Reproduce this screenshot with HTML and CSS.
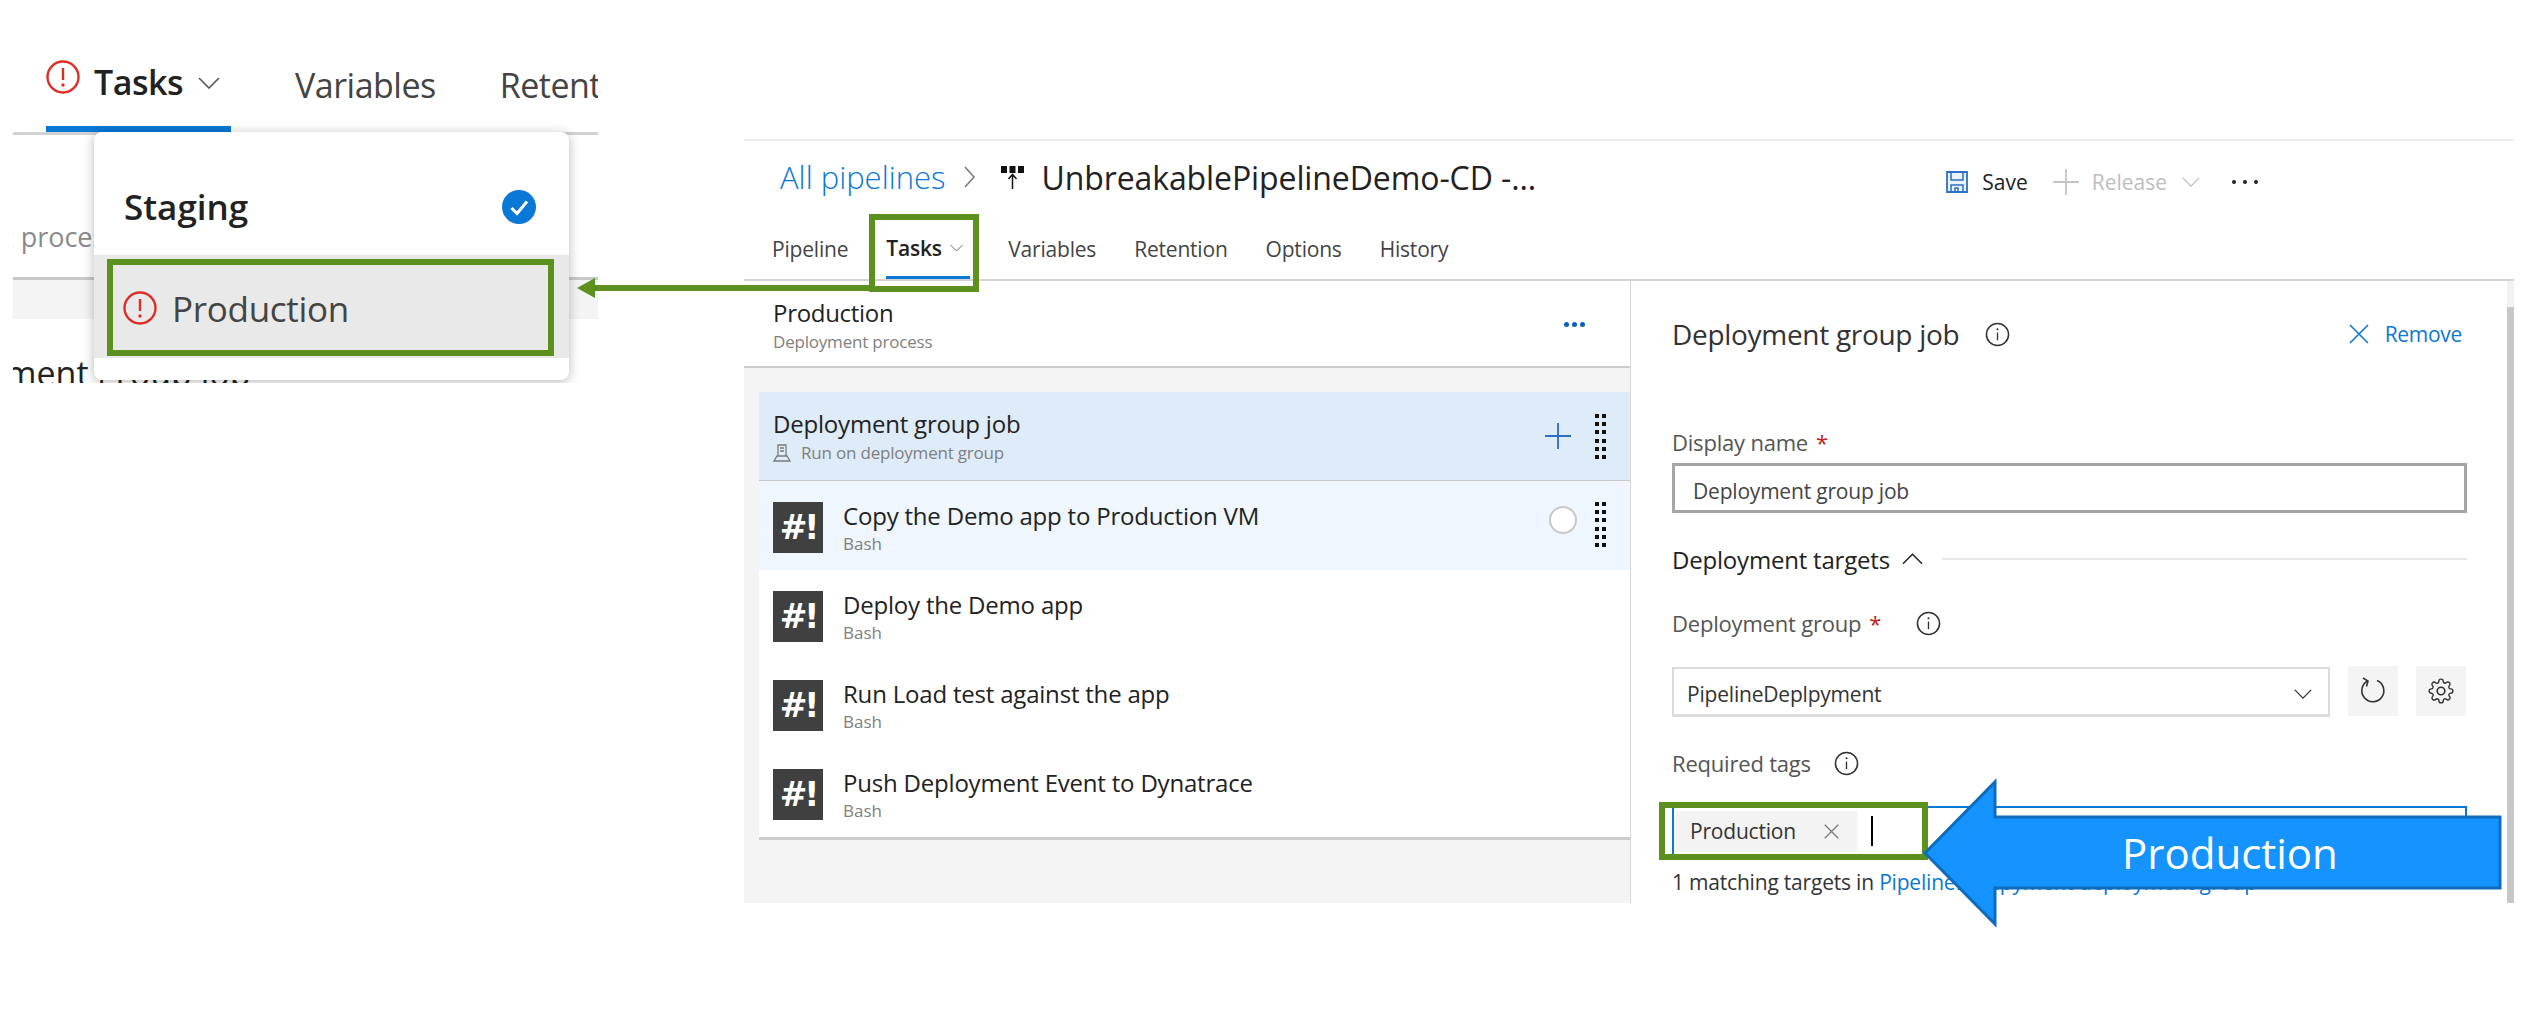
FILE: index.html
```html
<!DOCTYPE html>
<html lang="en">
<head>
<meta charset="UTF-8" />
<title>Deployment group job</title>
<link rel="stylesheet" href="styles.css">
</head>
<body>

<svg class="sprite" width="0" height="0">
  <symbol id="i-alert" viewBox="0 0 34 34">
    <circle cx="17" cy="17" r="15.5" fill="none" stroke="#dc2e28" stroke-width="2.4"/>
    <path d="M17 8v12" stroke="#dc2e28" stroke-width="2.4"/>
    <circle cx="17" cy="25" r="1.7" fill="#dc2e28"/>
  </symbol>
  <symbol id="i-check" viewBox="0 0 34 34">
    <circle cx="17" cy="17" r="17" fill="#0a78d6"/>
    <path d="M9.5 18l5.5 5.5 10-12" fill="none" stroke="#fff" stroke-width="3"/>
  </symbol>
  <symbol id="i-chev" viewBox="0 0 22 12">
    <path d="M1 1l10 10 10-10" fill="none" stroke="currentColor" stroke-width="1.6"/>
  </symbol>
  <symbol id="i-info" viewBox="0 0 26 26">
    <circle cx="13" cy="13" r="11.5" fill="none" stroke="#333" stroke-width="1.6"/>
    <path d="M13 11v8" stroke="#333" stroke-width="1.4"/>
    <circle cx="13" cy="7.5" r="1.1" fill="#333"/>
  </symbol>
  <symbol id="i-grip" viewBox="0 0 11 45">
    <path d="M0 0h4v4H0zM7 0h4v4H7zM0 8h4v4H0zM7 8h4v4H7zM0 16h4v4H0zM7 16h4v4H7zM0 25h4v4H0zM7 25h4v4H7zM0 33h4v4H0zM7 33h4v4H7zM0 41h4v4H0zM7 41h4v4H7z" fill="#111"/>
  </symbol>
  <symbol id="i-x" viewBox="0 0 20 20">
    <path d="M1 1l18 18M19 1L1 19" fill="none" stroke="currentColor" stroke-width="1.6"/>
  </symbol>
  <symbol id="i-plus" viewBox="0 0 26 26">
    <path d="M13 0v26M0 13h26" fill="none" stroke="currentColor" stroke-width="1.8"/>
  </symbol>
</svg>

<!-- left crop: tabs with the environment menu -->
<div class="crop-left">
  <div class="big-tabs">
    <div class="big-tab big-tab-active">
      <svg class="ic-34"><use href="#i-alert"/></svg>
      <span class="big-tab-name">Tasks</span>
      <svg class="big-chev"><use href="#i-chev"/></svg>
    </div>
    <div class="big-tab">Variables</div>
    <div class="big-tab">Retention</div>
  </div>
  <div class="under-sub">t process</div>
  <div class="under-band"></div>
  <div class="under-title">ment group job</div>

  <div class="env-menu">
    <div class="env-row env-staging">
      <span>Staging</span>
      <svg class="ic-34"><use href="#i-check"/></svg>
    </div>
    <div class="env-row env-production">
      <svg class="ic-34"><use href="#i-alert"/></svg>
      <span>Production</span>
    </div>
  </div>
</div>

<!-- right crop: release pipeline editor -->
<div class="crop-right">
  <div class="pipe-head">
    <a class="crumb">All pipelines</a>
    <svg class="crumb-chev" viewBox="0 0 11 22"><path d="M1 1l9 10-9 10" fill="none" stroke="#777" stroke-width="1.5"/></svg>
    <svg class="rel-icon" viewBox="0 0 23 23">
      <path d="M0 0h6v7H0zM8.500 0h6v7h-6zM17 0h6v7h-6z" fill="#111"/>
      <path d="M11.500 23V9M7.500 13l4-4.500 4 4.500" fill="none" stroke="#111" stroke-width="1.5"/>
    </svg>
    <span class="pipe-title">UnbreakablePipelineDemo-CD -...</span>
    <div class="toolbar">
      <svg class="save-icon" viewBox="0 0 22 22">
        <path d="M1 1h20v20H1z" fill="#eaf2fb" stroke="#2d6fc4" stroke-width="1.8"/>
        <path d="M5 1v8h12V1M5 21v-7h12v7M9 21v-4h3v4" fill="none" stroke="#2d6fc4" stroke-width="1.5"/>
      </svg>
      <span class="save-text">Save</span>
      <svg class="rel-plus"><use href="#i-plus"/></svg>
      <span class="rel-text">Release</span>
      <svg class="rel-chev"><use href="#i-chev"/></svg>
      <span class="tool-dots"><i></i><i></i><i></i></span>
    </div>
  </div>

  <div class="tabs">
    <div class="tab">Pipeline</div>
    <div class="tab tab-active">Tasks <svg class="tab-chev"><use href="#i-chev"/></svg></div>
    <div class="tab">Variables</div>
    <div class="tab">Retention</div>
    <div class="tab">Options</div>
    <div class="tab">History</div>
  </div>

  <div class="editor">
    <div class="tasks-col">
      <div class="stage-head">
        <div>
          <div class="stage-name">Production</div>
          <div class="stage-sub">Deployment process</div>
        </div>
        <span class="stage-dots"><i></i><i></i><i></i></span>
      </div>

      <div class="task-list">
        <div class="job-row">
          <div class="job-text">
            <div class="task-name">Deployment group job</div>
            <div class="job-sub">
              <svg class="agent-icon" viewBox="0 0 18 18">
                <path d="M5 1h8v11H5zM7 4h4M7 7h4M1 17l3-5h10l3 5z" fill="none" stroke="#7a7a7a" stroke-width="1.3"/>
              </svg>
              Run on deployment group
            </div>
          </div>
          <svg class="job-plus"><use href="#i-plus"/></svg>
          <svg class="grip"><use href="#i-grip"/></svg>
        </div>

        <div class="task-row task-hover">
          <div class="bash-icon">#!</div>
          <div class="task-text">
            <div class="task-name">Copy the Demo app to Production VM</div>
            <div class="task-sub">Bash</div>
          </div>
          <span class="task-radio"></span>
          <svg class="grip"><use href="#i-grip"/></svg>
        </div>
        <div class="task-row">
          <div class="bash-icon">#!</div>
          <div class="task-text">
            <div class="task-name">Deploy the Demo app</div>
            <div class="task-sub">Bash</div>
          </div>
        </div>
        <div class="task-row">
          <div class="bash-icon">#!</div>
          <div class="task-text">
            <div class="task-name">Run Load test against the app</div>
            <div class="task-sub">Bash</div>
          </div>
        </div>
        <div class="task-row">
          <div class="bash-icon">#!</div>
          <div class="task-text">
            <div class="task-name">Push Deployment Event to Dynatrace</div>
            <div class="task-sub">Bash</div>
          </div>
        </div>
      </div>
    </div>

    <div class="form-col">
      <div class="form-head">
        <span class="form-title">Deployment group job</span>
        <svg class="ic-info"><use href="#i-info"/></svg>
        <a class="remove"><svg class="remove-x"><use href="#i-x"/></svg>Remove</a>
      </div>

      <div class="label label-first">Display name <b>*</b></div>
      <div class="field field-name">Deployment group job</div>

      <div class="section-row">
        <span>Deployment targets</span>
        <svg class="section-chev"><use href="#i-chev"/></svg>
        <span class="section-line"></span>
      </div>

      <div class="label label-group">Deployment group <b>*</b><svg class="ic-info ic-info-far"><use href="#i-info"/></svg></div>
      <div class="select-row">
        <div class="select-box">
          <span>PipelineDeplpyment</span>
          <svg class="select-chev"><use href="#i-chev"/></svg>
        </div>
        <div class="square-btn">
          <svg class="refresh" viewBox="0 0 26 28">
            <path d="M17 3.500a11 11 0 1 1-9 0.300M3 1l5 3-1.500 5.500" fill="none" stroke="#333" stroke-width="1.6"/>
          </svg>
        </div>
        <div class="square-btn">
          <svg class="gear" viewBox="0 0 24 24">
            <circle cx="12" cy="12" r="3.500" fill="none" stroke="#333" stroke-width="1.5"/>
            <path d="M19.400 15a1.650 1.650 0 0 0 .33 1.820l.06.06a2 2 0 0 1 0 2.830 2 2 0 0 1-2.830 0l-.06-.06a1.650 1.650 0 0 0-1.820-.33 1.650 1.650 0 0 0-1 1.510V21a2 2 0 0 1-2 2 2 2 0 0 1-2-2v-.09A1.650 1.650 0 0 0 9 19.400a1.650 1.650 0 0 0-1.820.33l-.06.06a2 2 0 0 1-2.830 0 2 2 0 0 1 0-2.830l.06-.06a1.650 1.650 0 0 0 .33-1.820 1.650 1.650 0 0 0-1.510-1H3a2 2 0 0 1-2-2 2 2 0 0 1 2-2h.09A1.650 1.650 0 0 0 4.600 9a1.650 1.650 0 0 0-.33-1.820l-.06-.06a2 2 0 0 1 0-2.830 2 2 0 0 1 2.830 0l.06.06a1.650 1.650 0 0 0 1.820.33H9a1.650 1.650 0 0 0 1-1.510V3a2 2 0 0 1 2-2 2 2 0 0 1 2 2v.09a1.650 1.650 0 0 0 1 1.510 1.650 1.650 0 0 0 1.820-.33l.06-.06a2 2 0 0 1 2.830 0 2 2 0 0 1 0 2.830l-.06.06a1.650 1.650 0 0 0-.33 1.820V9a1.650 1.650 0 0 0 1.510 1H21a2 2 0 0 1 2 2 2 2 0 0 1-2 2h-.09a1.650 1.650 0 0 0-1.510 1z" fill="none" stroke="#333" stroke-width="1.300"/>
          </svg>
        </div>
      </div>

      <div class="label label-tags">Required tags<svg class="ic-info ic-info-near"><use href="#i-info"/></svg></div>
      <div class="tag-input">
        <span class="chip">Production<svg class="chip-x"><use href="#i-x"/></svg></span>
        <span class="caret"></span>
      </div>
      <div class="match">1 matching targets in <a>PipelineDeplpyment deployment group</a></div>
    </div>

    <div class="scroll"></div>
  </div>
</div>

<!-- callouts drawn over both crops -->
<svg class="annotations" viewBox="0 0 2528 1015">
  <rect x="110" y="262" width="441" height="91" fill="none" stroke="#5c9120" stroke-width="6"/>
  <rect x="872" y="217" width="104" height="72" fill="none" stroke="#5c9120" stroke-width="6"/>
  <rect x="1662" y="805" width="263" height="52" fill="none" stroke="#5c9120" stroke-width="6"/>
  <path d="M869 288H590" stroke="#5c9120" stroke-width="6"/>
  <path d="M577 288l18-10v20z" fill="#5c9120"/>
  <path d="M1925 853l70-71v35h505v71h-505v36z" fill="#1593ff" stroke="#0f6cbd" stroke-width="3"/>
</svg>
<div class="arrow-label">Production</div>

</body>
</html>
```

FILE: styles.css
```css
* {
  box-sizing: border-box;
  margin: 0;
  padding: 0;
}

html, body {
  width: 2528px;
  height: 1015px;
  overflow: hidden;
  background: #fff;
  color: #222;
  font-family: "Open Sans", "Noto Sans", sans-serif;
}

.sprite {
  position: absolute;
}

.ic-34 {
  width: 34px;
  height: 34px;
  flex: none;
}

/* Left crop */
.crop-left {
  position: absolute;
  z-index: 0;
  left: 13px;
  top: 30px;
  width: 585px;
  height: 353px;
  overflow: hidden;
}

.big-tabs {
  display: flex;
  gap: 64px;
  height: 105px;
  padding-left: 33px;
  border-bottom: 3px solid #d2d2d2;
  font-size: 34px;
  letter-spacing: -0.5px;
  color: #444;
  white-space: nowrap;
}

.big-tab {
  display: flex;
  flex: none;
  align-items: center;
  height: 102px;
  padding-top: 8px;
}

.big-tab-active {
  width: 185px;
  border-bottom: 6px solid #0a78d6;
  align-items: flex-start;
  padding-top: 30px;
  color: #222;
}

.big-tab-name {
  margin: 0 15px 0 14px;
  font-weight: 600;
  line-height: 44px;
}

.big-chev {
  width: 22px;
  height: 12px;
  margin-top: 17px;
  color: #555;
}

.under-sub {
  height: 142px;
  padding-top: 82px;
  margin-left: -9px;
  font-size: 27px;
  line-height: 40px;
  color: #8a8a8a;
}

.under-band {
  height: 42px;
  background: #f4f4f4;
  border-top: 3px solid #c8c8c8;
}

.under-title {
  margin: 30px 0 0 -8px;
  font-size: 34px;
  line-height: 48px;
  white-space: nowrap;
}

.env-menu {
  position: absolute;
  z-index: 1;
  left: 81px;
  top: 102px;
  width: 475px;
  height: 248px;
  padding-bottom: 22px;
  display: flex;
  flex-direction: column;
  background: #fff;
  border-radius: 8px;
  box-shadow: 0 2px 12px rgba(0, 0, 0, 0.28);
}

.env-row {
  display: flex;
  align-items: center;
}

.env-staging {
  height: 123px;
  padding: 26px 33px 0 30px;
  justify-content: space-between;
  font-size: 35px;
  font-weight: 600;
}

.env-production {
  height: 103px;
  gap: 15px;
  padding: 3px 0 0 29px;
  background: #e9e9e9;
  color: #444;
  font-size: 35px;
  letter-spacing: -0.3px;
}

/* Right crop */
.crop-right {
  position: absolute;
  left: 744px;
  top: 139px;
  width: 1770px;
  height: 764px;
  overflow: hidden;
  border-top: 2px solid #eee;
}

.pipe-head {
  display: flex;
  align-items: center;
  height: 72px;
  padding-left: 36px;
  white-space: nowrap;
}

.crumb {
  font-size: 31px;
  font-weight: 300;
  color: #0a78d6;
}

.crumb-chev {
  width: 11px;
  height: 22px;
  margin: 0 26px 0 19px;
}

.rel-icon {
  width: 23px;
  height: 23px;
  margin-right: 17px;
}

.pipe-title {
  font-size: 32px;
  letter-spacing: -0.1px;
  color: #222;
}

.toolbar {
  display: flex;
  align-items: center;
  margin-left: auto;
  padding: 10px 256px 0 0;
  font-size: 21px;
}

.save-icon {
  width: 22px;
  height: 22px;
  margin-right: 14px;
}

.save-text {
  margin-right: 25px;
}

.rel-plus {
  width: 26px;
  height: 26px;
  margin-right: 13px;
  color: #c4c4c4;
}

.rel-text {
  margin-right: 15px;
  color: #bdbdbd;
}

.rel-chev {
  width: 18px;
  height: 10px;
  margin-right: 32px;
  color: #bdbdbd;
}

.tool-dots,
.stage-dots {
  display: flex;
  gap: 7px;
}

.tool-dots i,
.stage-dots i {
  width: 4px;
  height: 4px;
  border-radius: 50%;
  background: #222;
}

.stage-dots {
  gap: 3px;
}

.stage-dots i {
  width: 5px;
  height: 5px;
  background: #0a5fb8;
}

.tabs {
  display: flex;
  gap: 38px;
  height: 68px;
  padding-left: 28px;
  border-bottom: 2px solid #d4d4d4;
  font-size: 21px;
  letter-spacing: -0.2px;
  color: #444;
}

.tab {
  display: flex;
  align-items: center;
  height: 66px;
  padding-top: 6px;
}

.tab-active {
  gap: 8px;
  width: 84px;
  border-bottom: 3px solid #0a78d6;
  font-weight: 600;
  color: #222;
}

.tab-chev {
  width: 13px;
  height: 8px;
  color: #666;
}

.editor {
  display: flex;
  height: 622px;
}

/* Task list */
.tasks-col {
  width: 887px;
  background: #f4f4f4;
  border-right: 1px solid #d8d8d8;
}

.stage-head {
  display: flex;
  align-items: center;
  justify-content: space-between;
  height: 87px;
  padding: 2px 45px 0 29px;
  background: #fff;
  border-bottom: 2px solid #ccc;
}

.stage-name {
  font-size: 24px;
  line-height: 34px;
  letter-spacing: -0.3px;
}

.stage-sub {
  font-size: 17px;
  line-height: 24px;
  color: #808080;
  letter-spacing: -0.2px;
}

.task-list {
  margin: 24px 0 0 15px;
  background: #fff;
  border-bottom: 3px solid #ccc;
}

.job-row {
  display: flex;
  align-items: center;
  height: 89px;
  padding: 0 24px 0 14px;
  background: #deebf8;
  border-bottom: 1px solid #c8c8c8;
}

.job-text {
  flex: 1;
}

.task-name {
  font-size: 24px;
  line-height: 34px;
  letter-spacing: -0.2px;
  color: #222;
}

.job-sub {
  display: flex;
  align-items: center;
  gap: 10px;
  font-size: 17px;
  line-height: 24px;
  letter-spacing: -0.2px;
  color: #808080;
}

.agent-icon {
  width: 18px;
  height: 18px;
}

.job-plus {
  width: 26px;
  height: 26px;
  margin-right: 24px;
  color: #2a6fc0;
}

.grip {
  width: 11px;
  height: 45px;
  flex: none;
}

.task-row {
  display: flex;
  align-items: flex-start;
  height: 89px;
  padding: 21px 24px 0 14px;
}

.task-hover {
  background: #eff6fd;
}

.bash-icon {
  width: 50px;
  height: 51px;
  flex: none;
  margin-right: 20px;
  background: #404040;
  color: #fff;
  font-family: "DejaVu Sans", sans-serif;
  font-size: 33px;
  font-weight: 700;
  line-height: 51px;
  text-align: center;
  letter-spacing: -3px;
}

.task-text {
  flex: 1;
  margin-top: -3px;
}

.task-sub {
  font-size: 17px;
  line-height: 22px;
  color: #808080;
}

.task-radio {
  width: 28px;
  height: 28px;
  margin: 4px 18px 0 0;
  background: #fff;
  border: 2px solid #c8c8c8;
  border-radius: 50%;
}

/* Job form */
.form-col {
  flex: 1;
  min-width: 0;
  padding: 0 40px 0 41px;
  background: #fff;
}

.form-head {
  display: flex;
  align-items: center;
  height: 106px;
  font-size: 28px;
  letter-spacing: -0.3px;
  color: #333;
}

.ic-info {
  width: 25px;
  height: 25px;
  flex: none;
}

.form-title {
  margin-right: 26px;
}

.remove {
  display: flex;
  align-items: center;
  gap: 16px;
  margin: 0 5px 0 auto;
  font-size: 21px;
  color: #0a78d6;
}

.remove-x {
  width: 20px;
  height: 20px;
}

.label {
  display: flex;
  align-items: center;
  gap: 8px;
  height: 30px;
  font-size: 22px;
  letter-spacing: -0.2px;
  color: #555;
}

.label b {
  font-weight: 400;
  color: #c42020;
}

.label-first {
  margin-top: 40px;
}

.label-group {
  margin-top: 32px;
}

.label-tags {
  margin-top: 31px;
}

.ic-info-far {
  margin-left: 27px;
}

.ic-info-near {
  margin-left: 15px;
}

.field {
  height: 50px;
  display: flex;
  align-items: center;
  font-size: 21px;
  letter-spacing: -0.2px;
  color: #444;
}

.field-name {
  margin: 6px 0 0 0;
  padding: 5px 0 0 18px;
  border: 3px solid #a6a6a6;
}

.section-row {
  display: flex;
  align-items: center;
  height: 34px;
  margin-top: 29px;
  font-size: 24px;
  letter-spacing: -0.2px;
}

.section-chev {
  width: 21px;
  height: 12px;
  margin: 0 19px 0 12px;
  transform: rotate(180deg);
}

.section-line {
  flex: 1;
  height: 2px;
  background: #e8e8e8;
}

.select-row {
  display: flex;
  align-items: flex-start;
  gap: 18px;
  margin-top: 28px;
}

.select-box {
  display: flex;
  align-items: center;
  justify-content: space-between;
  width: 658px;
  height: 50px;
  margin-top: 1px;
  padding: 4px 16px 0 13px;
  border: 2px solid #dcdcdc;
  border-bottom-width: 3px;
  font-size: 21px;
  letter-spacing: -0.2px;
  color: #333;
}

.select-chev {
  width: 18px;
  height: 10px;
}

.square-btn {
  display: flex;
  align-items: center;
  justify-content: center;
  width: 50px;
  height: 50px;
  background: #f4f4f4;
}

.refresh {
  width: 26px;
  height: 28px;
}

.gear {
  width: 26px;
  height: 26px;
}

.tag-input {
  display: flex;
  align-items: center;
  height: 50px;
  margin: 28px 0 0 0;
  padding-left: 2px;
  border: 2px solid #0a78d6;
}

.chip {
  display: flex;
  align-items: center;
  gap: 28px;
  width: 181px;
  height: 41px;
  padding-left: 14px;
  background: #f3f3f3;
  font-size: 21px;
  letter-spacing: -0.2px;
  color: #333;
}

.chip-x {
  width: 15px;
  height: 15px;
  color: #777;
}

.caret {
  width: 2px;
  height: 30px;
  margin-left: 14px;
  background: #000;
}

.match {
  margin-top: 11px;
  font-size: 21px;
  line-height: 30px;
  letter-spacing: -0.2px;
  color: #333;
  white-space: nowrap;
}

.match a {
  color: #0a78d6;
}

.scroll {
  width: 7px;
  flex: none;
  background: linear-gradient(#f2f2f2 26px, #c8c8c8 26px);
}

/* Callouts */
.annotations {
  position: absolute;
  left: 0;
  top: 0;
  width: 2528px;
  height: 1015px;
}

.arrow-label {
  position: absolute;
  left: 2122px;
  top: 823px;
  font-size: 42px;
  line-height: 60px;
  color: #fff;
}
```
